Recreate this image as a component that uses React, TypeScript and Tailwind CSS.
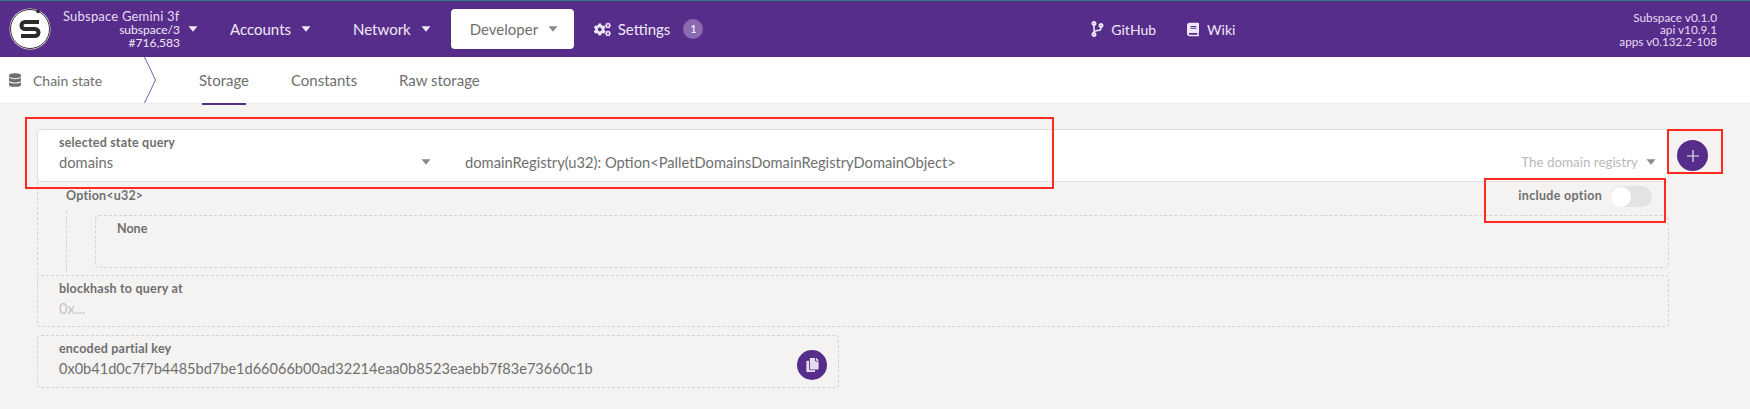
import React from "react";
import { FaBook, FaCodeBranch, FaCogs, FaCopy, FaDatabase } from "react-icons/fa";

const Caret: React.FC<{ className?: string }> = ({ className }) => (
    <svg viewBox="0 0 10 6" className={`h-[6px] w-[10px] shrink-0 fill-current ${className ?? ""}`}>
        <path d="M0.5 0.3h9L5 5.7z" />
    </svg>
);

const Logo = () => (
    <svg viewBox="0 0 42 42" className="h-[42px] w-[42px] shrink-0">
        <circle cx="21" cy="21" r="20.5" fill="#ffffff" />
        <circle cx="21" cy="21" r="19.5" fill="none" stroke="#2b2b2b" strokeWidth="1" />
        <circle cx="29" cy="3.5" r="1.8" fill="#2b2b2b" />
        <path
            d="M30 14H16a3.5 3.5 0 0 0 0 7h10a3.5 3.5 0 0 1 0 7H12"
            fill="none"
            stroke="#2b2b2b"
            strokeWidth="4"
        />
    </svg>
);

const NavItem: React.FC<{ label: string; className: string }> = ({ label, className }) => (
    <div className={`flex items-center gap-[10px] text-[15px] text-[#efe9f6] ${className}`}>
        {label}
        <Caret />
    </div>
);

const App = () => {
    return (
        <div className="relative h-[409px] w-[1750px] overflow-hidden bg-[#f4f3f2] font-['Lato','Noto_Sans',sans-serif] text-[#6f6f6f]">
            {/* header */}
            <header className="flex h-[57px] items-center border-t border-[#2a7d80] bg-[#572d8b] pl-[9px] pr-[33px] text-[#efe9f6]">
                <Logo />
                <div className="ml-[12px] flex w-[117px] shrink-0 flex-col">
                    <div className="whitespace-nowrap text-[13px] leading-[14px] tracking-[0.2px] text-[#e6dcf1]">Subspace Gemini 3f</div>
                    <div className="flex items-center justify-end text-[12px] leading-[13px]">
                        subspace/3
                        <Caret className="ml-[8px] mr-[-18px]" />
                    </div>
                    <div className="text-right text-[12px] leading-[14px]">#716,583</div>
                </div>
                <NavItem label="Accounts" className="ml-[50px]" />
                <NavItem label="Network" className="ml-[42px]" />
                <div className="ml-[20px] flex h-[40px] w-[123px] items-center gap-[10px] rounded bg-white pl-[19px] text-[15px] text-[#6f6f6f]">
                    Developer
                    <Caret className="text-[#8a8a8a]" />
                </div>
                <div className="ml-[20px] flex items-center gap-[7px] text-[15px]">
                    <FaCogs className="h-[17px] w-[17px]" />
                    Settings
                </div>
                <div className="ml-[13px] flex h-[20px] w-[20px] items-center justify-center rounded-full bg-[#8a6bb1] text-[11px] text-white">
                    1
                </div>
                <div className="ml-[388px] flex items-center gap-[7px] text-[14px]">
                    <FaCodeBranch className="h-[16px] w-[13px]" />
                    GitHub
                </div>
                <div className="ml-[31px] flex items-center gap-[8px] text-[14px]">
                    <FaBook className="h-[15px] w-[12px]" />
                    Wiki
                </div>
                <div className="ml-auto pt-px text-right text-[11.8px] leading-[12px] text-[#e6dcf1]">
                    <div>Subspace v0.1.0</div>
                    <div>api v10.9.1</div>
                    <div>apps v0.132.2-108</div>
                </div>
            </header>

            {/* tabs */}
            <nav className="flex h-[47px] items-center border-b border-[#eeeded] bg-white text-[15px]">
                <FaDatabase className="ml-[9px] h-[14px] w-[12px]" />
                <span className="ml-[12px] w-[111px] text-[14px]">Chain state</span>
                <svg viewBox="0 0 12 46" className="h-[46px] w-[12px] shrink-0" fill="none" stroke="#7d5fa6">
                    <path d="M0.5 0L11.5 23L0.5 46" />
                </svg>
                <div className="relative ml-[43px] flex h-full w-[92px] items-center">
                    Storage
                    <span className="absolute bottom-[-2px] left-[3px] h-[2px] w-[44px] bg-[#572d8b]" />
                </div>
                <span className="w-[108px]">Constants</span>
                <span>Raw storage</span>
            </nav>

            {/* storage query */}
            <main className="pl-[37px] pt-[25px]">
                <div className="flex items-center">
                    <div className="relative flex h-[53px] w-[1632px] items-end rounded border border-[#dfdfdf] bg-white pb-[9px] pl-[21px] text-[14.7px]">
                        <div className="absolute left-[21px] top-[5px] text-[12.5px] font-bold leading-[16px] tracking-[0.2px]">
                            selected state query
                        </div>
                        <div className="flex w-[372px] items-center justify-between leading-[20px]">
                            domains
                            <Caret className="h-[5px] w-[8px] text-[#8a8a8a]" />
                        </div>
                        <div className="ml-[34px] leading-[20px]">
                            domainRegistry(u32): Option&lt;PalletDomainsDomainRegistryDomainObject&gt;
                        </div>
                        <div className="ml-auto mr-[12px] flex items-center gap-[8px] text-[13.4px] leading-[20px] text-[#b9b9b9]">
                            The domain registry
                            <Caret className="h-[5px] w-[8px] text-[#8a8a8a]" />
                        </div>
                    </div>
                    <button className="ml-[8px] flex h-[31px] w-[31px] items-center justify-center rounded-full bg-[#572d8b]">
                        <svg viewBox="0 0 12 12" className="h-[12px] w-[12px]" stroke="#efe9f6" strokeWidth="1.2">
                            <path d="M6 0v12M0 6h12" />
                        </svg>
                    </button>
                </div>

                <div className="h-[93px] w-[1632px] border-l border-dashed border-[#d3d3d3] pl-[28px]">
                    <div className="flex h-[29px] items-center justify-between pr-[17px]">
                        <span className="text-[12.5px] font-bold tracking-[0.2px]">Option&lt;u32&gt;</span>
                        <div className="flex items-center gap-[9px]">
                            <span className="text-[12.5px] font-bold tracking-[0.3px]">include option</span>
                            <div className="flex h-[21px] w-[41px] items-center rounded-full bg-[#e2e3e5]">
                                <span className="h-[20px] w-[20px] rounded-full bg-white" />
                            </div>
                        </div>
                    </div>
                    <div className="h-[61px] border-l border-dashed border-[#d3d3d3] pl-[28px] pt-[4px]">
                        <div className="h-[53px] rounded border border-dashed border-[#d3d3d3] pl-[21px] pt-[5px] text-[12.5px] font-bold leading-[16px]">
                            None
                        </div>
                    </div>
                </div>

                <div className="h-[52px] w-[1632px] rounded border border-dashed border-[#d3d3d3] pl-[21px] pt-[5px]">
                    <div className="text-[12.5px] font-bold leading-[16px] tracking-[0.2px]">blockhash to query at</div>
                    <div className="mt-[2px] text-[14.6px] leading-[20px] text-[#c4c4c4]">0x...</div>
                </div>

                <div className="mt-[8px] flex h-[53px] w-[802px] items-center justify-between rounded border border-dashed border-[#d3d3d3] pl-[21px] pr-[11px]">
                    <div className="mt-[-3px]">
                        <div className="text-[12.5px] font-bold leading-[16px] tracking-[0.2px]">encoded partial key</div>
                        <div className="mt-[2px] text-[14.56px] leading-[20px]">
                            0x0b41d0c7f7b4485bd7be1d66066b00ad32214eaa0b8523eaebb7f83e73660c1b
                        </div>
                    </div>
                    <button className="mt-[7px] flex h-[30px] w-[30px] items-center justify-center rounded-full bg-[#572d8b]">
                        <FaCopy className="h-[14px] w-[13px] text-[#e6dcf1]" />
                    </button>
                </div>
            </main>

            {/* red annotation boxes drawn over the screenshot */}
            <div className="absolute left-[25px] top-[117px] h-[72px] w-[1029px] border-2 border-[#ff2a20]" />
            <div className="absolute left-[1667px] top-[129px] h-[45px] w-[56px] border-2 border-[#ff2a20]" />
            <div className="absolute left-[1484px] top-[178px] h-[45px] w-[182px] border-2 border-[#ff2a20]" />
        </div>
    );
};

export default App;
